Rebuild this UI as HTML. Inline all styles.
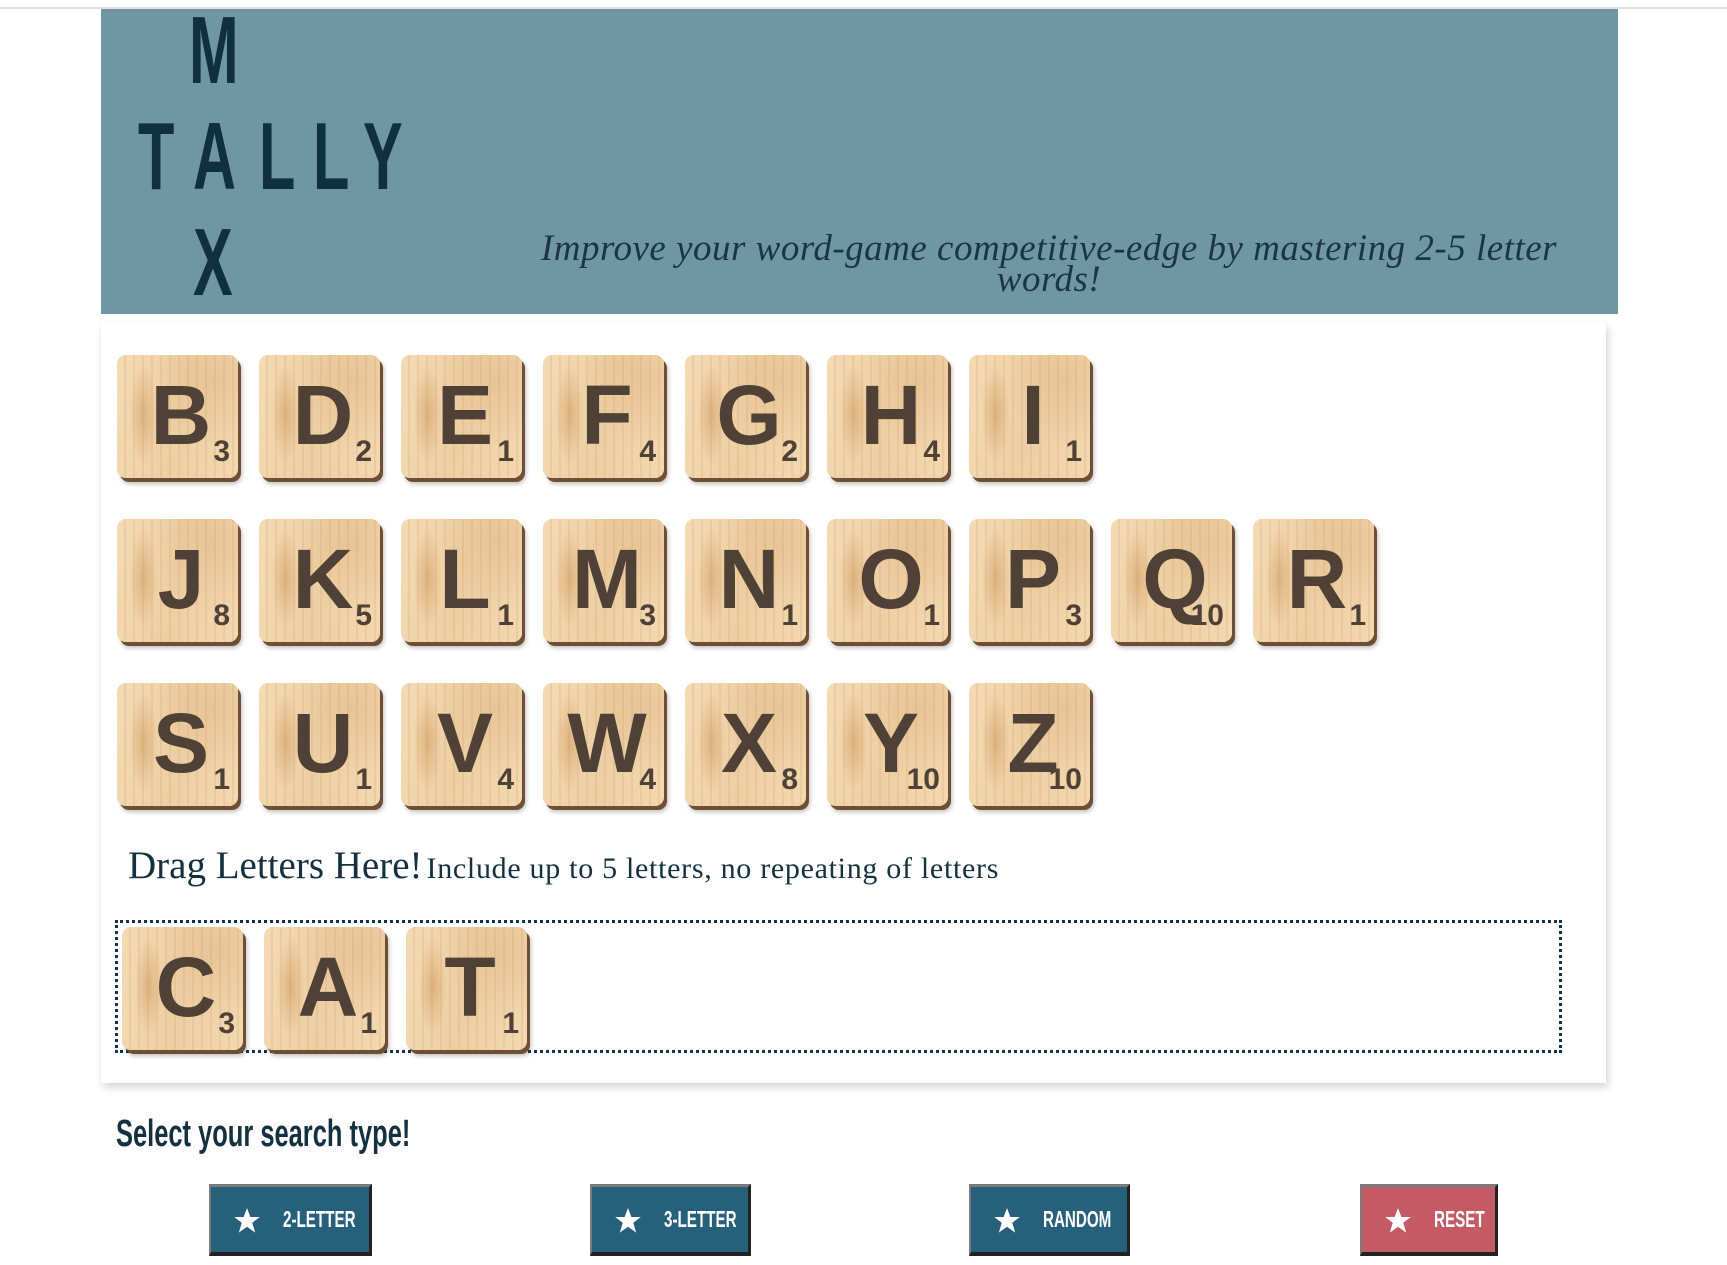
<!DOCTYPE html>
<html><head><meta charset="utf-8"><style>
*{margin:0;padding:0;box-sizing:border-box}
body{width:1727px;height:1265px;background:#fff;position:relative;overflow:hidden;font-family:"Liberation Sans",sans-serif}
.topline{position:absolute;left:0;top:7px;width:1727px;height:2px;background:#dfe1e4}
.header{position:absolute;left:101px;top:9px;width:1517px;height:305px;background:#7196a3}
.lg{position:absolute;font-family:"Liberation Sans Narrow","Liberation Sans",sans-serif;font-weight:bold;font-size:96px;line-height:96px;color:#11303f;transform:scaleX(.62);transform-origin:left top}
.tag{position:absolute;left:318px;top:224px;width:1260px;text-align:center;font-family:"Liberation Serif",serif;font-style:italic;font-size:37px;line-height:31px;color:#1a3545;letter-spacing:.5px}
.card{position:absolute;left:101px;top:323px;width:1505px;height:760px;background:#fff;box-shadow:2px 4px 8px rgba(0,0,0,.18)}
.t{position:absolute;width:121px;height:123px;border-radius:9px;
background:
radial-gradient(ellipse 14px 50px at 22% 48%,rgba(205,150,90,.55),transparent),
repeating-linear-gradient(90deg,rgba(200,150,95,.0) 0 7px,rgba(200,150,95,.18) 7px 9px),
radial-gradient(ellipse 60px 70px at 80% 20%,rgba(215,170,115,.35),transparent),
linear-gradient(100deg,#f4dab3,#edcfa3 50%,#f3d8b0);
box-shadow:3px 4px 0 #6e4f34,4px 6px 5px rgba(0,0,0,.25)}
.t b{position:absolute;left:0;width:128px;text-align:center;top:18px;font-size:84px;line-height:84px;font-weight:bold;color:#4f4135}
.t i{position:absolute;right:8px;top:82px;font-style:normal;font-weight:bold;font-size:30px;line-height:30px;color:#4f4135}
.drag{position:absolute;left:128px;top:843px;font-family:"Liberation Serif",serif;color:#14313f;white-space:nowrap}
.drag span{font-size:39px}.drag small{font-size:30px;letter-spacing:.7px}
.zone{position:absolute;left:115px;top:920px;width:1447px;height:133px;border:3px dotted #13334a}
.sel{position:absolute;left:116px;top:1113px;font-family:"Liberation Sans Narrow","Liberation Sans",sans-serif;font-weight:bold;font-size:38px;color:#14313f;transform:scaleX(.67);transform-origin:left top;white-space:nowrap}
.btn{position:absolute;top:1184px;height:72px;background:#26607a;border-top:3px solid #7b7b7b;border-left:2px solid #7b7b7b;border-right:3px solid #222;border-bottom:4px solid #222;color:#fff}
.btn.r{background:#c45b64}
.btn svg{position:absolute;left:22px;top:21px}
.btn span{position:absolute;left:72px;top:19px;font-family:"Liberation Sans Narrow","Liberation Sans",sans-serif;font-weight:bold;font-size:23px;transform:scaleX(.66);transform-origin:left top;white-space:nowrap}
</style></head><body>
<div class="topline"></div>
<div class="header">
<div class="lg" style="left:88px;top:-6px">M</div>
<div class="lg" style="left:37px;top:100px">T</div>
<div class="lg" style="left:92px;top:100px">A</div>
<div class="lg" style="left:158px;top:100px">L</div>
<div class="lg" style="left:212px;top:100px">L</div>
<div class="lg" style="left:262px;top:100px">Y</div>
<div class="lg" style="left:92px;top:206px">X</div>
<div class="tag">Improve your word-game competitive-edge by mastering 2-5 letter<br>words!</div>
</div>
<div class="card"></div>

<div class="t" style="left:117px;top:355px"><b>B</b><i>3</i></div>
<div class="t" style="left:259px;top:355px"><b>D</b><i>2</i></div>
<div class="t" style="left:401px;top:355px"><b>E</b><i>1</i></div>
<div class="t" style="left:543px;top:355px"><b>F</b><i>4</i></div>
<div class="t" style="left:685px;top:355px"><b>G</b><i>2</i></div>
<div class="t" style="left:827px;top:355px"><b>H</b><i>4</i></div>
<div class="t" style="left:969px;top:355px"><b>I</b><i>1</i></div>

<div class="t" style="left:117px;top:519px"><b>J</b><i>8</i></div>
<div class="t" style="left:259px;top:519px"><b>K</b><i>5</i></div>
<div class="t" style="left:401px;top:519px"><b>L</b><i>1</i></div>
<div class="t" style="left:543px;top:519px"><b>M</b><i>3</i></div>
<div class="t" style="left:685px;top:519px"><b>N</b><i>1</i></div>
<div class="t" style="left:827px;top:519px"><b>O</b><i>1</i></div>
<div class="t" style="left:969px;top:519px"><b>P</b><i>3</i></div>
<div class="t" style="left:1111px;top:519px"><b>Q</b><i>10</i></div>
<div class="t" style="left:1253px;top:519px"><b>R</b><i>1</i></div>

<div class="t" style="left:117px;top:683px"><b>S</b><i>1</i></div>
<div class="t" style="left:259px;top:683px"><b>U</b><i>1</i></div>
<div class="t" style="left:401px;top:683px"><b>V</b><i>4</i></div>
<div class="t" style="left:543px;top:683px"><b>W</b><i>4</i></div>
<div class="t" style="left:685px;top:683px"><b>X</b><i>8</i></div>
<div class="t" style="left:827px;top:683px"><b>Y</b><i>10</i></div>
<div class="t" style="left:969px;top:683px"><b>Z</b><i>10</i></div>

<div class="drag"><span>Drag Letters Here!</span> <small>Include up to 5 letters, no repeating of letters</small></div>
<div class="zone"></div>
<div class="t" style="left:122px;top:927px"><b>C</b><i>3</i></div>
<div class="t" style="left:264px;top:927px"><b>A</b><i>1</i></div>
<div class="t" style="left:406px;top:927px"><b>T</b><i>1</i></div>

<div class="sel">Select your search type!</div>

<div class="btn" style="left:209px;width:163px"><svg width="28" height="27" viewBox="0 0 24 23"><path fill="#fff" d="M12 0l2.9 7.6H23l-6.5 5 2.5 8.4L12 16l-7 5 2.5-8.4L1 7.6h8.1z"/></svg><span>2-LETTER</span></div>
<div class="btn" style="left:590px;width:161px"><svg width="28" height="27" viewBox="0 0 24 23"><path fill="#fff" d="M12 0l2.9 7.6H23l-6.5 5 2.5 8.4L12 16l-7 5 2.5-8.4L1 7.6h8.1z"/></svg><span>3-LETTER</span></div>
<div class="btn" style="left:969px;width:161px"><svg width="28" height="27" viewBox="0 0 24 23"><path fill="#fff" d="M12 0l2.9 7.6H23l-6.5 5 2.5 8.4L12 16l-7 5 2.5-8.4L1 7.6h8.1z"/></svg><span>RANDOM</span></div>
<div class="btn r" style="left:1360px;width:138px"><svg width="28" height="27" viewBox="0 0 24 23"><path fill="#fff" d="M12 0l2.9 7.6H23l-6.5 5 2.5 8.4L12 16l-7 5 2.5-8.4L1 7.6h8.1z"/></svg><span>RESET</span></div>
</body></html>
